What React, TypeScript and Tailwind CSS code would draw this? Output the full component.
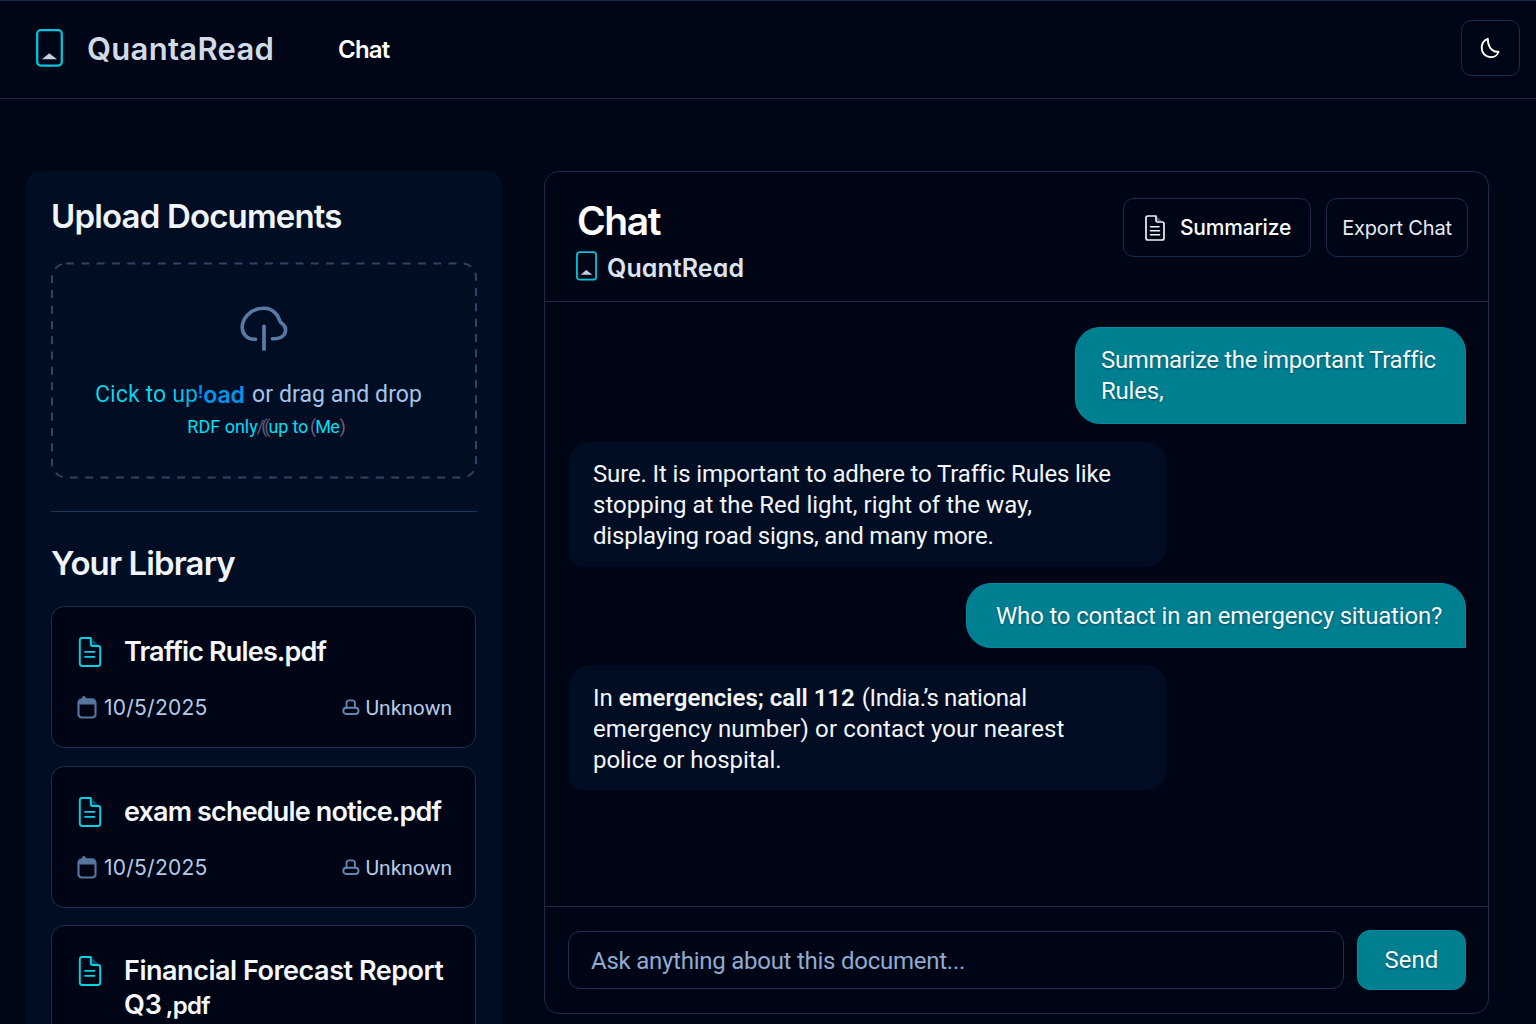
import type { ReactNode } from "react";

const inter = "font-['Inter','Liberation_Sans',sans-serif]";
const roboto = "font-['Roboto','Liberation_Sans',sans-serif]";

function Logo({ className }: { className: string }) {
  return (
    <svg viewBox="0 0 27 38" fill="none" className={className}>
      <rect x="1.2" y="1.2" width="24.6" height="35.4" rx="3.6" stroke="#04c3dc" strokeWidth="2.3" />
      <path d="M6 30.3 13.2 24.2 21 30.3Z" fill="#c3cfe2" />
    </svg>
  );
}

function PdfIcon() {
  return (
    <svg viewBox="0 0 24 32" fill="none" className="h-8 w-6 shrink-0">
      <path d="M13.5 2.2 21 9.5h-7.5Z" fill="#0a4660" />
      <path
        d="M4.2 2h8.6v6.2q0 1.8 1.8 1.8H20q2.2 0 2.2 2.2v15.200q0 2.600-2.600 2.600H4.400Q1.800 30 1.800 27.400V4.400Q1.800 2 4.200 2Z"
        stroke="#06d3e8"
        strokeWidth="1.9"
        strokeLinejoin="round"
      />
      <path d="M7 15.800h9.500M7 20.800h9.500" stroke="#06d3e8" strokeWidth="1.700" strokeLinecap="round" />
    </svg>
  );
}

function SummaryIcon() {
  return (
    <svg viewBox="0 0 20 26" fill="none" className="h-[26px] w-5 shrink-0">
      <path d="M11.500 1.200 17.500 6.500h-6Z" fill="#41577c" />
      <path
        d="M2.800 1h8.200v4.600q0 1.400 1.400 1.400h4.800q1.800 0 1.800 1.800v14.200q0 2-2 2H3q-2 0-2-2V2.800Q1 1 2.800 1Z"
        stroke="#eef2f8"
        strokeWidth="1.700"
        strokeLinejoin="round"
      />
      <path d="M5.500 11.700h8.500M5.500 15.700h9M5.500 19.700h9" stroke="#eef2f8" strokeWidth="1.600" strokeLinecap="round" />
    </svg>
  );
}

function CloudIcon() {
  return (
    <svg viewBox="0 0 48 46" fill="none" className="h-[46px] w-12">
      <path
        d="M15.500 34.200C6.500 35 2.200 28 2.200 22.500 2.200 15 9 3.200 24 3.200c8.500 0 14 6 16 13 .5 1.500 1.200 1.600 2.300 2.400 2.500 1.900 3.500 4 3.300 6.800-.4 5.600-5.600 8.800-13.100 8.300"
        stroke="#587ba6"
        strokeWidth="3.600"
        strokeLinecap="round"
        strokeLinejoin="round"
      />
      <path d="M24 21.500v22.500" stroke="#587ba6" strokeWidth="3.800" strokeLinecap="round" />
    </svg>
  );
}

function CalendarIcon() {
  return (
    <svg viewBox="0 0 20 24" fill="none" className="-mt-[3px] -ml-px h-6 w-5 shrink-0">
      <rect x="1.500" y="4.500" width="17" height="18" rx="3.200" stroke="#58779f" strokeWidth="2.100" />
      <path d="M1.500 9.500V7q0-3 3-3l1-2.500q1.800-1 3 .5L9.500 3.500h6q3 0 3 3v3Z" fill="#58779f" />
    </svg>
  );
}

function UserIcon() {
  return (
    <svg viewBox="0 0 18 17" fill="none" className="-mt-px h-[17px] w-[18px] shrink-0">
      <rect x="1.300" y="8.800" width="15.200" height="6.200" rx="3" stroke="#6685af" strokeWidth="1.900" />
      <path d="M4.500 8.500V4q0-2.700 2.700-2.700h3q2.700 0 2.700 2.700v4.500" stroke="#6685af" strokeWidth="1.800" />
    </svg>
  );
}

function DocCard({ children }: { children: ReactNode }) {
  return (
    <article className="min-h-[142px] shrink-0 rounded-[13px] border border-[#182f50] bg-[#000515] pr-[23px] pb-[25px] pl-[26px]">
      <div className="flex min-h-[87px] items-start pt-[28px] pb-[24px]">
        <div className="-mt-px mr-[22px] flex h-9 items-center">
          <PdfIcon />
        </div>
        <h3 className={`text-[27px] leading-[34px] font-[560] whitespace-nowrap text-[#f5f7fb] ${inter}`}>{children}</h3>
      </div>
      <div className={`flex h-7 items-center text-[21px] leading-7 text-[#b4cae7] ${inter}`}>
        <CalendarIcon />
        <span className="ml-[7px] tracking-[0.25px]">10/5/2025</span>
        <span className="ml-auto flex items-center">
          <UserIcon />
          <span className={`ml-[6px] tracking-[-0.05px] ${roboto}`}>Unknown</span>
        </span>
      </div>
    </article>
  );
}

function Header() {
  return (
    <header className="flex h-[99px] shrink-0 items-start border-t border-b border-[#1b2c47] pl-[36px]">
      <Logo className="mt-[28px] h-[38px] w-[27px]" />
      <span className={`mt-[28px] ml-[24px] w-[251px] text-[31px] leading-10 font-semibold tracking-[0.3px] text-[#d3dae7] ${inter}`}>
        QuantaRead
      </span>
      <a className={`mt-[29px] text-[24px] leading-10 font-[560] tracking-[-0.800px] text-white ${inter}`}>Chat</a>
      <button className="mt-[19px] mr-[16px] ml-auto flex h-14 w-[59px] items-center justify-center rounded-[10px] border border-[#172c4e]">
        <svg viewBox="0 0 22 24" fill="none" className="mr-[2px] h-6 w-[22px]">
          <path
            d="M8.800 2.800C4.500 4.500 2.700 8 2.700 11.800c0 5.200 3.800 9.400 8.800 9.400 3.800 0 7.200-2.200 8-5.600-2 .4-3.700.1-5.700-1.200C10 12 8.800 8.500 8.800 2.800Z"
            stroke="#ffffff"
            strokeWidth="1.900"
            strokeLinejoin="round"
          />
        </svg>
      </button>
    </header>
  );
}

function Sidebar() {
  return (
    <aside className="flex h-[900px] w-[476px] shrink-0 flex-col rounded-[14px] bg-[#000d22] pr-[25px] pl-[25px]">
      <h2 className={`mt-[25px] text-[33px] leading-10 font-[560] tracking-[-0.840px] whitespace-nowrap text-[#eff3fa] ${inter}`}>
        Upload Documents
      </h2>
      <div className="relative mt-[26px] flex h-[217px] shrink-0 flex-col items-center">
        <svg viewBox="0 0 426 217" fill="none" className="absolute inset-0 h-full w-full">
          <rect x="1" y="1.500" width="424" height="214" rx="14" stroke="#2d4565" strokeWidth="2" strokeDasharray="8 7.300" />
        </svg>
        <div className="mt-[43px]">
          <CloudIcon />
        </div>
        <p className={`mt-[28px] mr-[11px] flex text-[23px] leading-8 whitespace-nowrap text-[#a5c4ea] ${roboto}`}>
          <span className="bg-linear-to-r from-[#00dcf5] from-60% to-[#00b4f0] bg-clip-text tracking-[0.150px] text-transparent">Cick to up</span>
          <span className="-mt-[3px] text-[19px] font-semibold text-[#008df0]">!</span>
          <span className={`font-semibold text-[#0095ea] ${inter}`}>oad</span>
          <span className="ml-[7px] tracking-[0.100px]">or drag and drop</span>
        </p>
        <p className={`ml-[5px] flex text-[18px] leading-8 whitespace-nowrap text-[#00dff2] ${roboto}`}>
          <span>RDF only</span>
          <span className="-ml-px tracking-[-3px] text-[#5f5a7a]">/((</span>
          <span className="ml-px mr-[2px] tracking-[-0.200px]">up to</span>
          <span className="-mr-px text-[#6d6186]">(</span>
          <span className="tracking-[-0.500px]">Me</span>
          <span className="text-[#6d6186]">)</span>
        </p>
      </div>
      <hr className="mt-[32px] shrink-0 border-t border-[#1f3757]" />
      <h2 className={`mt-[31px] text-[33px] leading-10 font-[560] tracking-[-0.900px] text-[#eff3fa] ${inter}`}>Your Library</h2>
      <div className="mt-[23px] mr-px flex flex-col">
        <DocCard>
          <span className="tracking-[-0.850px]">Traffic Rules.pdf</span>
        </DocCard>
        <div className="h-[18px] shrink-0" />
        <DocCard>
          <span className="tracking-[-0.850px]">exam schedule notice.pdf</span>
        </DocCard>
        <div className="h-[17px] shrink-0" />
        <DocCard>
          <span className="block tracking-[-0.470px]">Financial Forecast Report</span>
          <span className="block">
            Q3 <span className="-ml-[3px] text-[24px] tracking-[-0.700px]">,pdf</span>
          </span>
        </DocCard>
      </div>
    </aside>
  );
}

function UserBubble({ className, children }: { className: string; children: ReactNode }) {
  return (
    <div
      className={`self-end rounded-[25px] rounded-br-none border border-[#058b9c] bg-[#007f90] text-[24px] leading-[31px] whitespace-nowrap text-[#f3fafd] [text-shadow:0_1px_2px_#01485a] ${roboto} ${className}`}
    >
      {children}
    </div>
  );
}

function BotBubble({ className, children }: { className: string; children: ReactNode }) {
  return (
    <div className={`h-[125px] w-[598px] rounded-[22px] rounded-bl-[14px] bg-[#000d22] pl-[24px] text-[24px] leading-[31px] whitespace-nowrap text-[#f2f5fa] ${roboto} ${className}`}>
      {children}
    </div>
  );
}

function ChatPanel() {
  return (
    <section className="flex h-[843px] w-[945px] shrink-0 flex-col rounded-[15px] border border-[#182d4a] bg-[#000516]">
      <div className="flex h-[130px] shrink-0 border-b border-[#1b2d49] pl-[31px]">
        <div className="pt-[24px]">
          <h1 className={`ml-px text-[39px] leading-[50px] font-[560] tracking-[-1.400px] text-white ${inter}`}>Chat</h1>
          <div className="mt-[2px] flex items-center">
            <Logo className="h-[30px] w-[21px]" />
            <span className={`mt-[5px] ml-[10px] text-[25px] leading-[30px] font-[560] tracking-[0.080px] text-[#dde3ee] [font-feature-settings:'cv11'] ${inter}`}>
              QuantRead
            </span>
          </div>
        </div>
        <button className={`mt-[26px] mr-[15px] ml-auto flex h-[59px] w-[188px] items-center rounded-[11px] border border-[#172c4e] pl-[21px] text-[21px] font-medium tracking-[-0.200px] text-[#fafcff] ${inter}`}>
          <SummaryIcon />
          <span className="mt-px ml-[15px]">Summarize</span>
        </button>
        <button className={`mt-[26px] mr-[20px] flex h-[59px] w-[142px] items-center justify-center rounded-[11px] border border-[#172c4e] text-[20px] tracking-[-0.150px] whitespace-nowrap text-[#e6ecf5] ${inter}`}>
          Export Chat
        </button>
      </div>
      <div className="flex grow flex-col pt-[25px] pr-[22px] pl-[24px]">
        <UserBubble className="h-[97px] w-[391px] pt-[17px] pl-[25px]">
          <p className="tracking-[-0.370px]">Summarize the important Traffic</p>
          <p className="tracking-[-0.200px]">Rules,</p>
        </UserBubble>
        <div className="h-[18px]" />
        <BotBubble className="pt-[17px]">
          <p className="tracking-[-0.140px]">Sure. It is important to adhere to Traffic Rules like</p>
          <p className="tracking-[0.030px]">stopping at the Red light, right of the way,</p>
          <p className="tracking-[-0.200px]">displaying road signs, and many more.</p>
        </BotBubble>
        <div className="h-[16px]" />
        <UserBubble className="h-[65px] w-[500px] pt-[17px] pl-[29px]">
          <p className="tracking-[-0.180px]">Who to contact in an emergency situation?</p>
        </UserBubble>
        <div className="h-[17px]" />
        <BotBubble className="pt-[18px]">
          <p>
            In <b className="font-semibold">emergencies; call 112</b> <span className="ml-px tracking-[-0.420px]">(India.’s national</span>
          </p>
          <p className="tracking-[0.120px]">emergency number) or contact your nearest</p>
          <p className="tracking-[-0.050px]">police or hospital.</p>
        </BotBubble>
      </div>
      <div className="flex h-[107px] shrink-0 items-start border-t border-[#1b2d49] pt-[23px] pl-[23px]">
        <input
          placeholder="Ask anything about this document..."
          className={`mt-px h-[58px] w-[776px] rounded-[12px] border border-[#1a3050] bg-transparent pt-[2px] pl-[22px] text-[24px] tracking-[-0.250px] text-white placeholder:text-[#8fabd0] ${roboto}`}
        />
        <button className={`ml-[13px] h-[60px] w-[109px] rounded-[13px] border border-[#058b9c] bg-[#007f90] text-[24px] text-[#f3fafd] [text-shadow:0_1px_2px_#01485a] ${roboto}`}>
          Send
        </button>
      </div>
    </section>
  );
}

export default function App() {
  return (
    <div className="flex h-[1024px] w-[1536px] flex-col overflow-hidden bg-[#000616]">
      <Header />
      <main className="flex gap-[42px] pt-[72px] pl-[26px]">
        <Sidebar />
        <ChatPanel />
      </main>
    </div>
  );
}
